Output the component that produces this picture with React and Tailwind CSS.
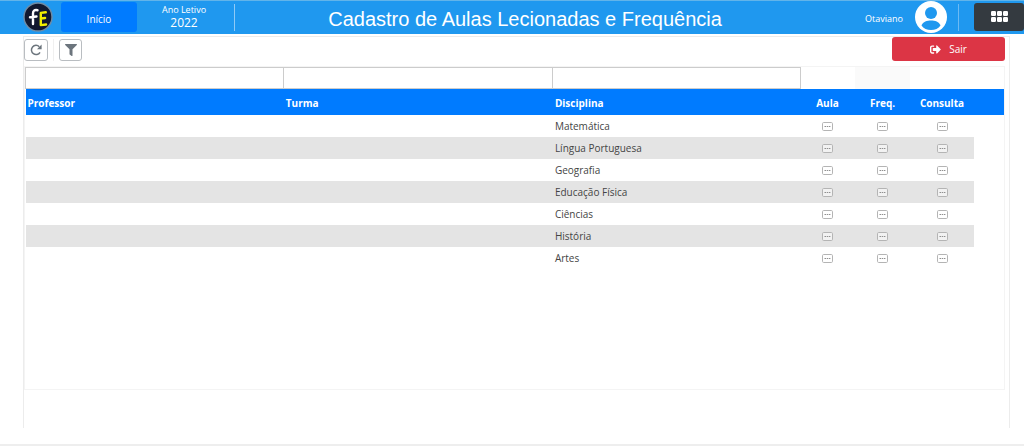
import React from "react";
import { FaFilter, FaSignOutAlt } from "react-icons/fa";

const disciplinas = [
  "Matemática",
  "Língua Portuguesa",
  "Geografia",
  "Educação Física",
  "Ciências",
  "História",
  "Artes",
];

const filtros = ["Professor", "Turma", "Disciplina"];
const acoes = ["Aula", "Freq.", "Consulta"];

function Logo() {
  return (
    <svg viewBox="0 0 30 30" className="size-[30px]" role="img" aria-label="fE">
      <circle cx="15" cy="15" r="14" fill="#11182f" stroke="#6f8ca6" strokeWidth="1.4" />
      <g fill="none" strokeWidth="2.4" strokeLinecap="round" strokeLinejoin="round">
        <path d="M14.500 8.200c-3.200-.6-4.500.6-4.500 3.300V22M7 15.300l6.500-.8" stroke="#fff" />
        <path d="M22.800 10.300l-5 .6v12.200l5.300-.6M17.800 16.500l4.300-.5" stroke="#f3f000" />
      </g>
    </svg>
  );
}

function AvatarIcon() {
  return (
    <svg viewBox="0 0 32 32" className="size-8" aria-hidden="true">
      <circle cx="16" cy="16" r="16" fill="#fff" />
      <circle cx="16" cy="12" r="6" fill="#1f98ef" />
      <path d="M6.500 24.500C8 20.500 12 19.400 16 19.400s8 1.100 9.500 5.100C23.500 27.500 20 29 16 29s-7.500-1.500-9.500-4.500z" fill="#1f98ef" />
    </svg>
  );
}

function RefreshIcon() {
  return (
    <svg viewBox="0 0 12 12" className="size-3" aria-hidden="true">
      <path d="M10 8.300A4.600 4.600 0 1 1 9.300 2.700" fill="none" stroke="#6c757d" strokeWidth="1.500" />
      <path d="M11.600.6v4.600H7z" fill="#6c757d" />
    </svg>
  );
}

function AppsIcon() {
  return (
    <svg viewBox="0 0 17 12" className="h-3 w-[17px]" fill="#fff" aria-hidden="true">
      {[0, 6, 12].map((x) => (
        <React.Fragment key={x}>
          <rect x={x} y="0" width="5" height="5" rx="1.200" />
          <rect x={x} y="6" width="5" height="5" rx="1.200" />
        </React.Fragment>
      ))}
    </svg>
  );
}

function MoreIcon() {
  return (
    <svg viewBox="0 0 11 9" className="h-[9px] w-[11px]" aria-hidden="true">
      <rect x=".5" y=".5" width="10" height="8" rx="1.200" fill="#fff" fillOpacity=".5" stroke="#b4b4b4" />
      <path d="M2.500 4.500h6" stroke="#909090" strokeWidth="1.200" strokeDasharray="1.500 .7" />
    </svg>
  );
}

function Header() {
  return (
    <header className="flex h-[34px] items-center border-t border-[#62b4ea] bg-[#1f98ef] pb-px pl-[23px] text-white">
      <Logo />
      <button type="button" className="ml-2 h-[30px] w-19 rounded-[3px] bg-[#007bff] pt-1 text-[10px]">
        Início
      </button>
      <div className="ml-6 flex w-[46px] flex-col items-center whitespace-nowrap">
        <div className="text-[9px] leading-3">Ano Letivo</div>
        <div className="text-[12px] leading-[14px]">2022</div>
      </div>
      <div className="ml-[27px] h-[27px] w-px bg-[#8fcaf6]" />
      <h1 className="flex-1 pt-1 pr-[50px] text-center font-['Liberation_Sans',Arial,sans-serif] text-[20px] leading-6 whitespace-nowrap">
        Cadastro de Aulas Lecionadas e Frequência
      </h1>
      <span className="pt-1 text-[9px]">Otaviano</span>
      <div className="ml-3">
        <AvatarIcon />
      </div>
      <div className="ml-[11px] h-[27px] w-px bg-[#6cbaf4]" />
      <button
        type="button"
        aria-label="Aplicativos"
        className="ml-[15px] flex h-7 w-[50px] items-center justify-center rounded-[3px] bg-[#343a40]"
      >
        <AppsIcon />
      </button>
    </header>
  );
}

function Toolbar() {
  return (
    <div className="flex h-[29px] items-start">
      <button
        type="button"
        aria-label="Atualizar"
        className="mt-0.5 flex h-[22px] w-6 items-center justify-center rounded-[3px] border border-[#b9bdc1]"
      >
        <RefreshIcon />
      </button>
      <div className="mt-0.5 ml-[5px] h-[22px] w-px bg-[#f0f0f0]" />
      <button
        type="button"
        aria-label="Filtrar"
        className="mt-0.5 ml-[5px] flex h-[22px] w-[23px] items-center justify-center rounded-[3px] border border-[#b9bdc1] text-[12px] text-[#6c757d]"
      >
        <FaFilter />
      </button>
      <button
        type="button"
        className="mr-1 ml-auto flex h-6 w-[113px] items-center justify-center gap-2 rounded-[3px] bg-[#dc3545] text-[10px] text-white"
      >
        <FaSignOutAlt className="size-[11px]" />
        Sair
      </button>
    </div>
  );
}

function AulasTable() {
  return (
    <table className="w-full table-fixed border-collapse text-[10px] leading-4">
      <colgroup>
        <col className="w-[26.4%]" />
        <col className="w-[27.5%]" />
        <col />
        <col className="w-[55px]" />
        <col className="w-[55px]" />
        <col className="w-16" />
        <col className="w-[30px]" />
      </colgroup>
      <thead>
        <tr className="group h-[22px]">
          {filtros.map((f) => (
            <td key={f} className="border-r border-[#cccccc] p-0 first:border-l">
              <input
                type="text"
                aria-label={`Filtrar ${f}`}
                className="block h-[22px] w-full border-y border-[#cccccc] bg-white px-1"
              />
            </td>
          ))}
          <td />
          <td className="bg-[#fafafa]" />
          <td />
          <td />
        </tr>
        <tr className="h-[26px] bg-[#007bff] text-white">
          {filtros.map((f) => (
            <th key={f} scope="col" className="px-0.5 pt-0.5 pb-0 text-left font-bold">
              {f}
            </th>
          ))}
          {acoes.map((a) => (
            <th key={a} scope="col" className="px-0 pt-0.5 pb-0 text-center font-bold">
              {a}
            </th>
          ))}
          <td />
        </tr>
      </thead>
      <tbody className="text-[#444444]">
        {disciplinas.map((d) => (
          <tr key={d} className="group h-[22px]">
            <td className="p-0 group-even:bg-[#e4e4e4]" />
            <td className="p-0 group-even:bg-[#e4e4e4]" />
            <td className="px-0.5 py-0 group-even:bg-[#e4e4e4]">{d}</td>
            {acoes.map((a) => (
              <td key={a} className="p-0 group-even:bg-[#e4e4e4]">
                <button type="button" aria-label={`${a} ${d}`} className="mx-auto block">
                  <MoreIcon />
                </button>
              </td>
            ))}
            <td />
          </tr>
        ))}
      </tbody>
    </table>
  );
}

export default function App() {
  return (
    <div className="flex min-h-screen flex-col bg-white font-['Open_Sans','Noto_Sans',sans-serif]">
      <Header />
      <main className="mt-0.5 mr-[14px] mb-4 ml-[23px] flex flex-1 flex-col border-x border-t border-[#ececec]">
        <Toolbar />
        <section className="mr-1 mb-[38px] flex-1 border border-[#f4f4f4]">
          <AulasTable />
        </section>
      </main>
      <footer className="h-0.5 bg-[#eeeeee]" />
    </div>
  );
}
